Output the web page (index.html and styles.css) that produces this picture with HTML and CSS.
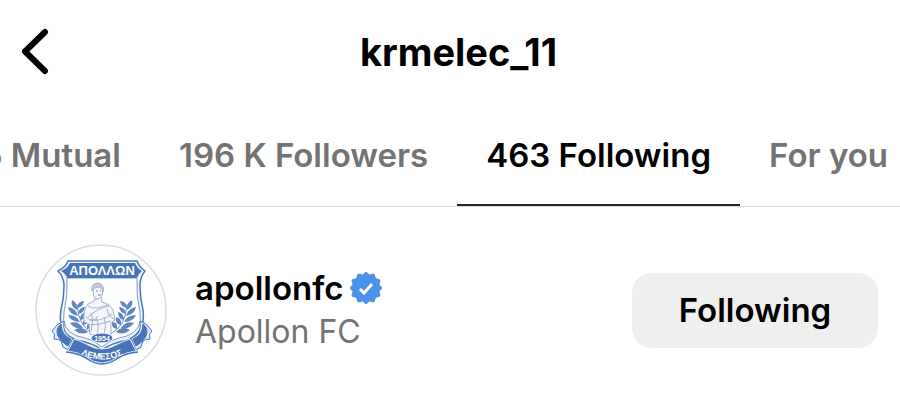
FILE: index.html
```
<!DOCTYPE html>
<html lang="en">
<head>
    <meta charset="UTF-8">
    <meta name="viewport" content="width=device-width, initial-scale=1.0">
    <title>krmelec_11</title>
    <link rel="stylesheet" href="styles.css">
</head>
<body>
    <header class="header">
        <button class="back" aria-label="Back">
            <svg width="36" height="48" viewBox="0 0 36 48" fill="none" stroke="#000" stroke-width="6" stroke-linecap="round" stroke-linejoin="round">
                <path d="M28 4 L8 23.500 L28 43"/>
            </svg>
        </button>
        <h1>krmelec_11</h1>
    </header>

    <nav class="tabs">
        <a class="tab" href="#mutual">5 Mutual</a>
        <a class="tab" href="#followers">196 K Followers</a>
        <a class="tab active" href="#following">463 Following</a>
        <a class="tab" href="#foryou">For you</a>
    </nav>

    <main class="list">
        <div class="user">
            <svg class="avatar" viewBox="0 0 132 132" role="img" aria-label="Apollon FC">
                <defs>
                    <path id="ribbonText" d="M38 106 Q67 125 96 106"/>
                    <g id="laurel">
                        <path d="M61 91 Q43 84 42 60" fill="none" stroke="#6a8dc5" stroke-width="1"/>
                        <g fill="#5f85c1">
                            <path d="M42 66 Q35 62 37 56 Q43 59 42 66Z"/>
                            <path d="M42 64 Q43 57 49 57 Q48 63 42 64Z"/>
                            <path d="M43 72 Q34 70 33 63 Q41 64 43 72Z"/>
                            <path d="M43 70 Q44 63 50 63 Q49 69 43 70Z"/>
                            <path d="M45 78 Q36 78 33 71 Q42 71 45 78Z"/>
                            <path d="M45 76 Q45 69 51 68 Q51 75 45 76Z"/>
                            <path d="M48 84 Q40 86 35 79 Q43 76 48 84Z"/>
                            <path d="M48 81 Q47 74 53 73 Q54 80 48 81Z"/>
                            <path d="M53 88 Q46 92 39 86 Q47 81 53 88Z"/>
                            <path d="M52 85 Q51 78 57 78 Q58 84 52 85Z"/>
                        </g>
                    </g>
                </defs>
                <circle cx="66" cy="66" r="65" fill="#fff" stroke="#dcdcdc" stroke-width="1.500"/>

                <!-- shield -->
                <path d="M33 17 H102 Q104 23 110 27 Q105 33 105 42 Q105 54 108 66 Q111 88 93 96 Q76 99 67 106 Q58 99 41 96 Q22 88 26 66 Q29 54 29 42 Q29 33 23 27 Q31 23 33 17Z" fill="#eff4fb" stroke="#4b76b7" stroke-width="1.500"/>
                <path d="M32 34 H102 Q101 52 105 68 Q108 86 92 92 Q76 95 67 103 Q58 95 42 92 Q26 86 29 68 Q33 52 32 34Z" fill="#fff" stroke="#7b9bcc" stroke-width="1"/>
                <path d="M35 19 H100 Q102 24 107 27 Q103 30 102 34 H32 Q31 30 26 27 Q33 24 35 19Z" fill="#4674b6"/>
                <text class="crest-name" x="67" y="31" text-anchor="middle">ΑΠΟΛΛΩΝ</text>

                <use href="#laurel"/>
                <use href="#laurel" transform="matrix(-1 0 0 1 134 0)"/>

                <!-- Apollo -->
                <g fill="#f4f6fa" stroke="#a3b1c8" stroke-width="1" stroke-linejoin="round">
                    <path d="M59 57 L61 53 H66 L67 58 Q75 60 78 66 L80 76 L76 79 L76 91 Q66 95 55 90 L54 80 L49 78 Q48 65 53 60Z"/>
                    <path d="M58 47 Q57 41 62 40 Q68 40 68 46 L67 52 Q65 56 61 55 Q58 53 58 47Z"/>
                    <path d="M57 47 Q56 39 63 39 Q70 40 68 48 Q67 43 63 43 Q59 43 57 47Z" fill="#c2cbda"/>
                    <path d="M53 62 Q60 67 74 60 M53 73 Q63 64 74 62 M54 76 Q66 78 77 70 M55 81 Q64 81 76 77 M56 87 Q59 76 56 69 M62 90 Q65 80 61 74 M69 91 Q72 81 69 73 M51 73 Q58 80 63 72 M72 65 Q73 72 79 75" fill="none"/>
                    <path d="M61 47 h2 M65 47 h1 M63 51 h3" fill="none" stroke="#7b8ba6"/>
                </g>

                <ellipse cx="67" cy="94" rx="11" ry="5" fill="#4674b6" stroke="#fff" stroke-width="1"/>
                <text class="crest-year" x="67" y="97" text-anchor="middle">1954</text>

                <!-- ribbon -->
                <g id="ribbonEnd" stroke="#4674b6" stroke-width="1" stroke-linejoin="round">
                    <path d="M29 77 Q22 79 17 87 Q21 90 19 95 Q24 95 26 97 L28 103 L33 106 L38 94 Q27 91 29 77Z" fill="#dfe9f6"/>
                    <path d="M26 80 Q20 85 23 92 Q26 98 33 102 L36 95 Q26 91 26 80Z" fill="#4674b6"/>
                </g>
                <use href="#ribbonEnd" transform="matrix(-1 0 0 1 134 0)"/>
                <path d="M39 95 Q46 97 53 101 Q67 109 81 101 Q88 97 95 95 L101 107 Q91 108 83 113 Q75 119 67 119 Q59 119 51 113 Q43 108 33 107Z" fill="#4674b6" stroke="#dfe9f6" stroke-width="1"/>
                <path d="M31 108 Q43 109 51 114 Q59 120 67 120 Q75 120 83 114 Q91 109 103 108" fill="none" stroke="#4674b6" stroke-width="1.500"/>
                <text class="crest-city"><textPath href="#ribbonText" startOffset="50%" text-anchor="middle">ΛΕΜΕΣΟΣ</textPath></text>
            </svg>

            <div class="info">
                <div class="username">
                    <a href="#apollonfc">apollonfc</a>
                    <svg class="badge" viewBox="0 0 32 32" role="img" aria-label="Verified">
                        <path d="M16 0 L19.500 3 L24 2 L25.500 6.500 L30 8 L29 12.500 L32 16 L29 19.500 L30 24 L25.500 25.500 L24 30 L19.500 29 L16 32 L12.500 29 L8 30 L6.500 25.500 L2 24 L3 19.500 L0 16 L3 12.500 L2 8 L6.500 6.500 L8 2 L12.500 3Z" fill="#4b93e8" stroke="#4b93e8" stroke-linejoin="round"/>
                        <path d="M10 17 L14 21 L22 12" fill="none" stroke="#fff" stroke-width="3"/>
                    </svg>
                </div>
                <div class="fullname">Apollon FC</div>
            </div>

            <button class="follow">Following</button>
        </div>
    </main>
</body>
</html>
```
FILE: styles.css
```
body {
    font-family: Inter, "Liberation Sans", sans-serif;
    margin: 0;
    background-color: #fff;
    color: #000;
    overflow-x: hidden;
}

a {
    color: inherit;
    text-decoration: none;
}

button {
    font-family: inherit;
    color: inherit;
    border: none;
    cursor: pointer;
}

.header {
    display: grid;
    grid-template-columns: 1fr auto 1fr;
    align-items: center;
    height: 104px;
    padding-left: 17px;
}

.back {
    display: flex;
    justify-self: start;
    padding: 0;
    background: none;
}

h1 {
    margin: 0;
    font-size: 38px;
    line-height: 44px;
    font-weight: 700;
}

.tabs {
    display: flex;
    justify-content: flex-end;
    overflow: hidden;
    border-bottom: 1px solid #dbdbdb;
}

.tab {
    flex: none;
    padding: 29px 29px 27px;
    font-size: 33px;
    line-height: 44px;
    font-weight: 600;
    color: #737373;
    border-bottom: 2px solid transparent;
}

.tab:last-child {
    margin-right: -17px;
}

.tab.active {
    color: #000;
    border-bottom-color: #262626;
}

.user {
    display: flex;
    align-items: center;
    padding: 37px 22px 28px 35px;
}

.avatar {
    flex: none;
    width: 132px;
    height: 132px;
    margin-right: 28px;
}

.crest-name,
.crest-year,
.crest-city {
    font-family: "Liberation Sans", sans-serif;
    font-weight: 700;
    fill: #fff;
}

.crest-name {
    font-size: 13px;
}

.crest-year {
    font-size: 7px;
}

.crest-city {
    font-size: 9px;
}

.info {
    flex: 1;
    line-height: 44px;
    font-size: 32px;
}

.username {
    display: flex;
    align-items: center;
    gap: 7px;
    font-size: 33px;
    font-weight: 600;
}

.badge {
    width: 32px;
    height: 32px;
}

.fullname {
    color: #737373;
}

.follow {
    width: 246px;
    height: 75px;
    border-radius: 20px;
    background-color: #efefef;
    font-size: 33px;
    font-weight: 600;
}
```
